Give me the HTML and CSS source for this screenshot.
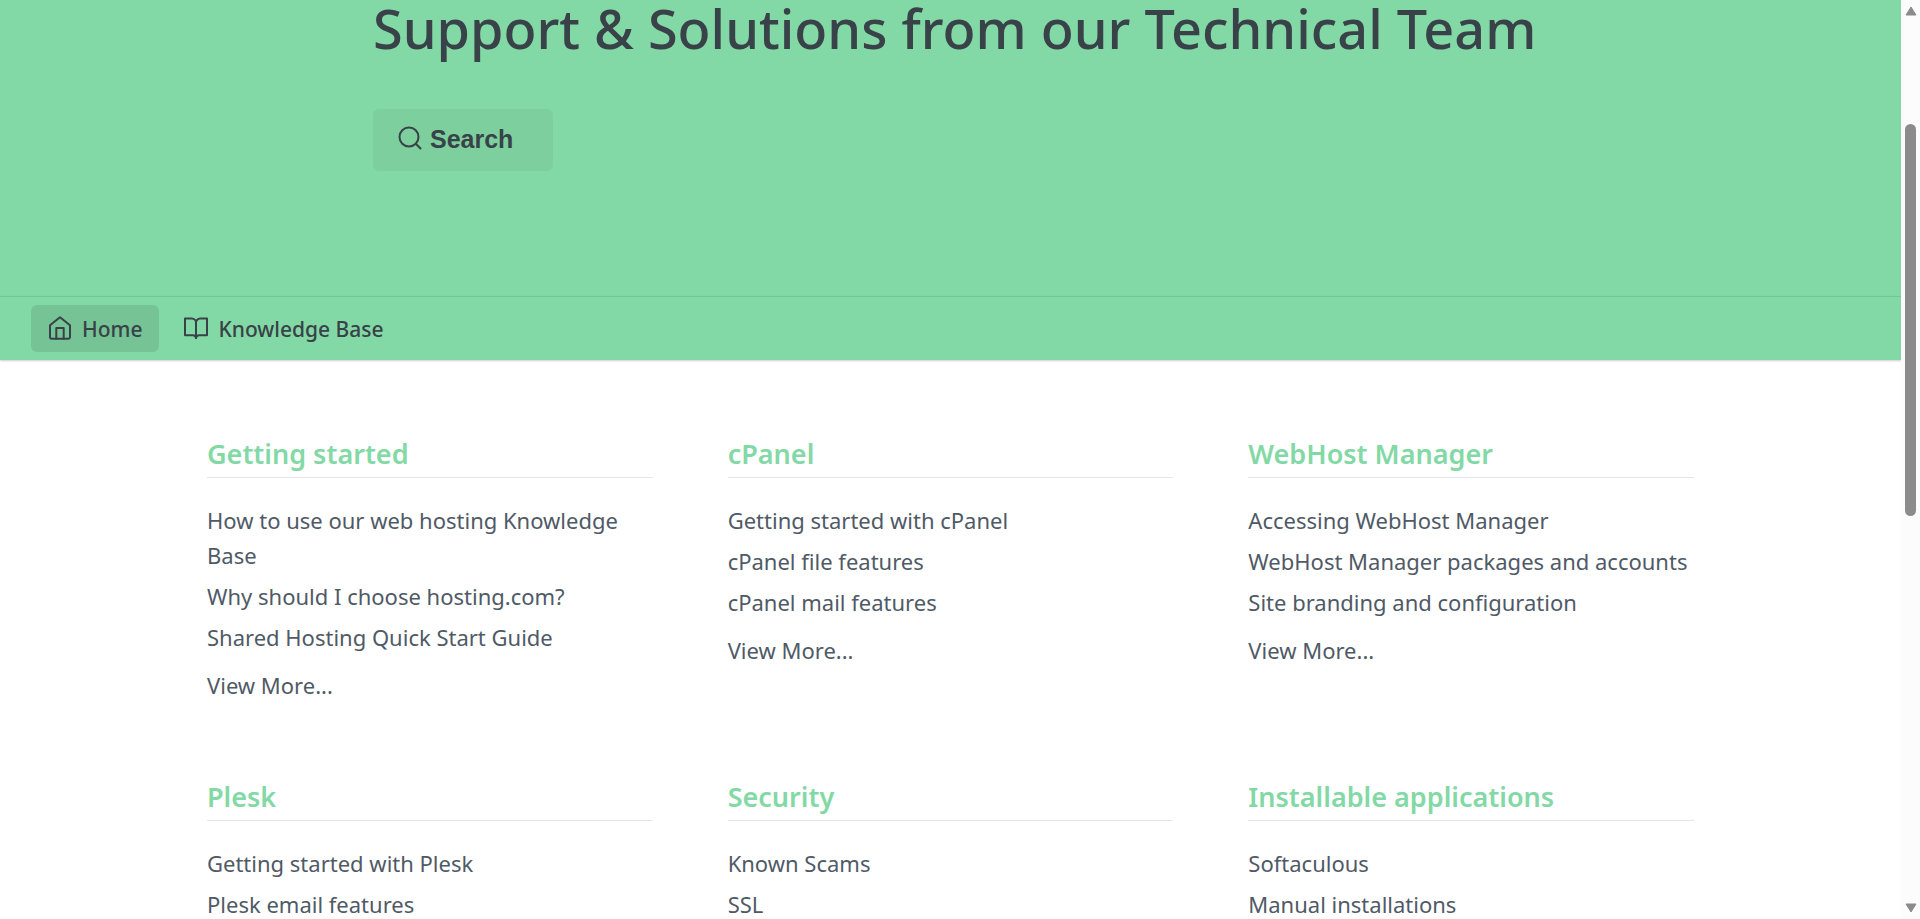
FILE: index.html
```html
<!DOCTYPE html>
<html lang="en">
<head>
    <meta charset="UTF-8">
    <meta name="viewport" content="width=device-width, initial-scale=1.0">
    <title>Support &amp; Solutions from our Technical Team</title>
    <link rel="stylesheet" href="styles.css">
</head>
<body>
    <div class="page">
        <header class="hero">
            <div class="hero-inner">
                <h1>Support &amp; Solutions from our Technical Team</h1>
                <button type="button" class="search-btn">
                    <svg class="icon-search" viewBox="0 0 24 24" aria-hidden="true">
                        <circle cx="11" cy="11" r="9.5"/>
                        <path d="M17.8 17.8 22.5 22.5"/>
                    </svg>
                    Search
                </button>
            </div>
        </header>

        <nav class="navbar">
            <a href="#" class="nav-link active">
                <svg class="nav-icon" viewBox="0 0 24 24" aria-hidden="true">
                    <path d="M2 9.2 12 1.2l10 8V21a1.8 1.8 0 0 1-1.8 1.8H3.8A1.8 1.8 0 0 1 2 21z"/>
                    <path d="M8.3 22.8V12h7.4v10.8"/>
                </svg>
                <span>Home</span>
            </a>
            <a href="#" class="nav-link">
                <svg class="nav-icon" viewBox="0 0 24 24" aria-hidden="true">
                    <path d="M1 2.5h6.8A4.2 4.2 0 0 1 12 6.7V22a3.2 3.2 0 0 0-3.2-2.7H1z"/>
                    <path d="M23 2.5h-6.8A4.2 4.2 0 0 0 12 6.7V22a3.2 3.2 0 0 1 3.2-2.7H23z"/>
                </svg>
                <span>Knowledge Base</span>
            </a>
        </nav>

        <main class="categories">
            <section class="category">
                <h2><a href="#">Getting started</a></h2>
                <ul>
                    <li><a href="#">How to use our web hosting Knowledge Base</a></li>
                    <li><a href="#">Why should I choose hosting.com?</a></li>
                    <li><a href="#">Shared Hosting Quick Start Guide</a></li>
                </ul>
                <a href="#" class="view-more">View More...</a>
            </section>
            <section class="category">
                <h2><a href="#">cPanel</a></h2>
                <ul>
                    <li><a href="#">Getting started with cPanel</a></li>
                    <li><a href="#">cPanel file features</a></li>
                    <li><a href="#">cPanel mail features</a></li>
                </ul>
                <a href="#" class="view-more">View More...</a>
            </section>
            <section class="category">
                <h2><a href="#">WebHost Manager</a></h2>
                <ul>
                    <li><a href="#">Accessing WebHost Manager</a></li>
                    <li><a href="#">WebHost Manager packages and accounts</a></li>
                    <li><a href="#">Site branding and configuration</a></li>
                </ul>
                <a href="#" class="view-more">View More...</a>
            </section>
            <section class="category">
                <h2><a href="#">Plesk</a></h2>
                <ul>
                    <li><a href="#">Getting started with Plesk</a></li>
                    <li><a href="#">Plesk email features</a></li>
                </ul>
            </section>
            <section class="category">
                <h2><a href="#">Security</a></h2>
                <ul>
                    <li><a href="#">Known Scams</a></li>
                    <li><a href="#">SSL</a></li>
                </ul>
            </section>
            <section class="category">
                <h2><a href="#">Installable applications</a></h2>
                <ul>
                    <li><a href="#">Softaculous</a></li>
                    <li><a href="#">Manual installations</a></li>
                </ul>
            </section>
        </main>
    </div>

    <!-- Scrollbar -->
    <div class="scrollbar" aria-hidden="true">
        <svg class="arrow" viewBox="0 0 12 10"><path d="M6 1 11 9H1z"/></svg>
        <div class="track">
            <div class="thumb"></div>
        </div>
        <svg class="arrow" viewBox="0 0 12 10"><path d="M6 9 11 1H1z"/></svg>
    </div>
</body>
</html>
```

FILE: styles.css
```css
/* General Styling */
* {
    box-sizing: border-box;
}

body {
    display: flex;
    height: 100vh;
    margin: 0;
    overflow: hidden;
    font-family: "Noto Sans", sans-serif;
    color: #384248;
    background-color: #fff;
}

a {
    color: inherit;
    text-decoration: none;
}

.page {
    flex: 1;
    min-width: 0;
}

/* Hero */
.hero {
    height: 296px;
    background-color: #83d9a5;
}

.hero-inner {
    max-width: 1155px;
    margin: 0 auto;
}

.hero h1 {
    margin: 0 0 53px;
    font-size: 54px;
    font-weight: 500;
    line-height: 56px;
    white-space: nowrap;
}

.search-btn {
    display: flex;
    align-items: center;
    gap: 8px;
    width: 180px;
    height: 62px;
    padding: 0 25px 2px;
    border: 0;
    border-radius: 6px;
    font-family: "Liberation Sans", Arial, sans-serif;
    font-size: 25px;
    font-weight: bold;
    color: #384248;
    background-color: #7dcf9d;
    cursor: pointer;
}

.icon-search,
.nav-icon {
    flex: none;
    width: 24px;
    height: 24px;
    margin-bottom: 2px;
    fill: none;
    stroke: currentColor;
    stroke-width: 2;
    stroke-linecap: round;
    stroke-linejoin: round;
}

/* Navigation */
.navbar {
    display: flex;
    gap: 8px;
    height: 64px;
    padding: 8px 31px;
    border-top: 1px solid #76c395;
    background-color: #83d9a5;
    box-shadow: 0 1px 2px rgba(0, 0, 0, 0.2);
}

.nav-link {
    display: flex;
    align-items: center;
    gap: 10px;
    height: 47px;
    padding: 0 17px;
    border-radius: 6px;
    font-size: 21px;
    font-weight: 500;
    white-space: nowrap;
}

.nav-link.active {
    background-color: #76c395;
}

/* Categories */
.categories {
    display: grid;
    grid-template-columns: repeat(3, 1fr);
    gap: 75px;
    max-width: 1487px;
    margin: 0 auto;
    padding-top: 75px;
}

.category h2 {
    margin: 0 0 25px;
    padding-bottom: 4px;
    border-bottom: 1px solid #e3e5e6;
    font-size: 27px;
    font-weight: 600;
    line-height: 38px;
    color: #83d9a5;
}

.category ul {
    margin: 0;
    padding: 0;
    list-style: none;
}

.category li {
    margin-bottom: 6px;
}

.category li,
.view-more {
    font-size: 22px;
    line-height: 35px;
    color: #4f5a66;
}

.view-more {
    display: block;
    margin-top: 13px;
}

/* Scrollbar */
.scrollbar {
    display: flex;
    flex-direction: column;
    align-items: center;
    width: 19px;
    padding: 6px 0;
    background-color: #fcfcfc;
}

.arrow {
    width: 12px;
    height: 10px;
    fill: #8b8b8b;
    stroke: #8b8b8b;
    stroke-width: 1;
    stroke-linejoin: round;
}

.track {
    flex: 1;
    padding-top: 108px;
}

.thumb {
    width: 11px;
    height: 392px;
    border-radius: 6px;
    background-color: #8b8b8b;
}
```
